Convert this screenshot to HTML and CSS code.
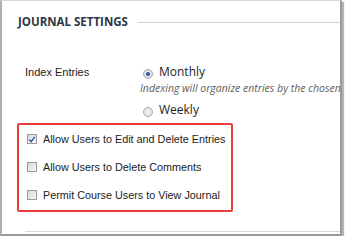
FILE: index.html
```html
<!DOCTYPE html>
<html lang="en">

<head>
  <meta charset="UTF-8" />
  <title>Journal Settings</title>
  <link rel="stylesheet" href="styles.css">
</head>

<body>
  <div class="panel">
    <div class="panel-head">
      <h2>JOURNAL SETTINGS</h2>
      <span class="rule"></span>
    </div>

    <!-- Index entries -->
    <div class="field">
      <div class="field-label">Index Entries</div>
      <div class="field-options">
        <label class="radio-row"><span class="radio checked"></span> Monthly</label>
        <p class="hint">Indexing will organize entries by the chosen time period</p>
        <label class="radio-row weekly"><span class="radio"></span> Weekly</label>
      </div>
    </div>

    <!-- Permissions -->
    <div class="highlight">
      <label class="check-row">
        <span class="check checked">
          <svg width="9" height="9" viewBox="0 0 9 9"><path d="M1.5 4.5 L3.6 7 L7.6 1.5" fill="none" stroke="#2a4fa8" stroke-width="1.4"/></svg>
        </span>
        Allow Users to Edit and Delete Entries
      </label>
      <label class="check-row"><span class="check"></span> Allow Users to Delete Comments</label>
      <label class="check-row"><span class="check"></span> Permit Course Users to View Journal</label>
    </div>

    <div class="foot-rule"></div>
  </div>
</body>

</html>
```

FILE: styles.css
```css
body {
  margin: 0;
  background: white;
  font-family: "Liberation Sans", Arial, sans-serif;
  color: #222;
}

.panel {
  box-sizing: border-box;
  width: 342px;
  height: 236px;
  background: white;
  border-left: 2px solid #b0b0b0;
  border-top: 1px solid #d8d8d8;
  border-right: 2px solid #9a9a9a;
  border-bottom: 2px solid #9a9a9a;
  box-shadow: 2px 2px 1px #b5b5b5;
  overflow: hidden;
}

.panel-head {
  display: flex;
  align-items: center;
  gap: 10px;
  padding: 13px 0 0 16px;
}

.panel-head h2 {
  margin: 0;
  font-family: "Open Sans", sans-serif;
  font-size: 11.5px;
  line-height: 16px;
  font-weight: bold;
  color: #2c3744;
  white-space: nowrap;
}

.rule {
  flex: 1;
  border-top: 1px solid #d4d4d4;
}

.field {
  display: flex;
  margin-top: 34px;
}

.field-label {
  width: 115px;
  padding-left: 23px;
  font-size: 11px;
  line-height: 16px;
  flex-shrink: 0;
}

.field-options {
  flex: 1;
  min-width: 0;
  font-family: "Open Sans", sans-serif;
  font-size: 12px;
  color: #1e1e1e;
}

.radio-row {
  display: flex;
  align-items: center;
  gap: 6px;
  line-height: 16px;
  padding-left: 3px;
}

.weekly {
  margin-top: 6px;
}

.radio {
  box-sizing: border-box;
  width: 10px;
  height: 10px;
  margin-top: 3px;
  border-radius: 50%;
  border: 1px solid #a8a8a8;
  background: radial-gradient(circle, #f4f4f4 0, #dcdcdc 100%);
}

.radio.checked {
  background: radial-gradient(circle, #3f6fb8 0, #2a59a8 28%, #e8e8e8 40%, #d0d0d0 100%);
}

.hint {
  margin: 1px 0 0;
  font-style: italic;
  font-size: 10.5px;
  line-height: 15px;
  color: #606060;
  white-space: nowrap;
}

.highlight {
  box-sizing: border-box;
  width: 216px;
  height: 89px;
  margin: 5px 0 0 15px;
  padding: 7px 0 0 8px;
  border: 2px solid #ec3b3b;
  border-radius: 2px;
  display: flex;
  flex-direction: column;
  gap: 14px;
}

.check-row {
  display: flex;
  align-items: center;
  gap: 6px;
  font-size: 10.8px;
  line-height: 14px;
  white-space: nowrap;
}

.check {
  box-sizing: border-box;
  width: 10px;
  height: 10px;
  border: 1px solid #9a9a9a;
  background: linear-gradient(135deg, #d8d8d8, #f6f6f6);
  display: flex;
  align-items: center;
  justify-content: center;
}

.check svg {
  display: block;
}

.foot-rule {
  margin: 19px 0 0 23px;
  border-top: 1px solid #d8d8d8;
}
```
